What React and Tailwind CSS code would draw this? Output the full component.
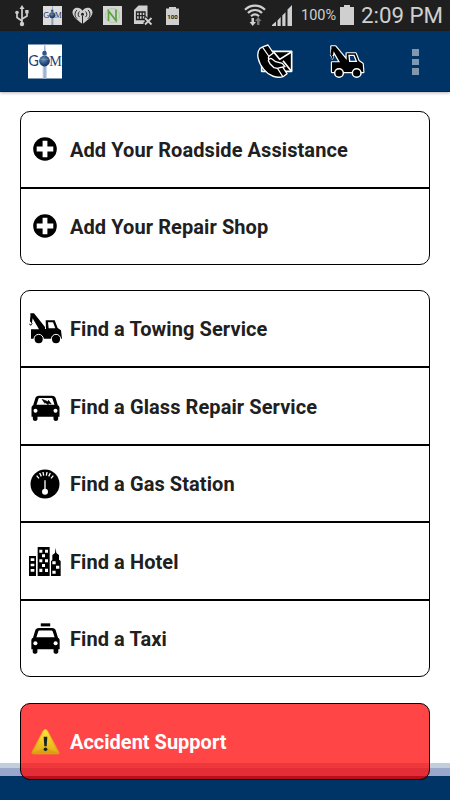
function UsbIcon() {
  return (
    <svg width="14" height="22" viewBox="0 0 14 22" fill="none" stroke="#cfcfcf" strokeWidth="1.7">
      <path d="M7 3v16M7 16 2 12.5V8M7 14l5-3V7" />
      <path d="M7 0 4.5 4h5z" fill="#cfcfcf" stroke="none" />
      <circle cx="7" cy="19" r="2.2" fill="#cfcfcf" stroke="none" />
      <circle cx="2" cy="7.5" r="1.8" fill="#cfcfcf" stroke="none" />
      <path d="M10.2 5h3.4v3.4h-3.4z" fill="#cfcfcf" stroke="none" />
    </svg>
  )
}

function GomLogo({ className }) {
  return (
    <svg className={className} viewBox="0 0 34 34">
      <defs>
        <radialGradient id="globe" cx="0.4" cy="0.35" r="0.7">
          <stop offset="0" stopColor="#7192b8" />
          <stop offset="0.6" stopColor="#294d7c" />
          <stop offset="1" stopColor="#12305c" />
        </radialGradient>
      </defs>
      <path fill="#fff" d="M0 0h34v34H0z" />
      <path fill="#b4c5dc" d="M16.4 0h.8l.5 7 1 3v24h-4V10l1-3z" />
      <path fill="#8ba5c8" d="M16.7 0h.4l.3 8v26h-1V8z" />
      <path fill="#335784" d="M15 6.5h3l.8 2-.5 2h-3.600l-.5-2z" />
      <text x="0.3" y="21.8" fontSize="14.500" fill="#1f4374" textLength="10.6" lengthAdjust="spacingAndGlyphs" className="font-['Lato']">G</text>
      <text x="21.2" y="21.8" fontSize="14.500" fill="#1f4374" textLength="12.6" lengthAdjust="spacingAndGlyphs" className="font-['Liberation_Serif']">M</text>
      <circle cx="16.5" cy="16.5" r="5.4" fill="url(#globe)" />
      <path d="M12 14.500c3 .8 6 .8 8.800 0" stroke="#86a2c6" strokeWidth=".5" fill="none" />
    </svg>
  )
}

function HeartRadioIcon() {
  return (
    <svg width="21" height="18" viewBox="0 0 21 18">
      <path fill="#cfcfcf" d="M10.5 17C7 14 .5 10 .5 5.400.5 2.500 2.700.7 5.300.7c2.200 0 4 1.200 5.200 3 1.200-1.800 3-3 5.200-3 2.600 0 4.800 1.800 4.800 4.700 0 4.600-6.500 8.600-10 11.600z" />
      <g fill="none" stroke="#222" strokeWidth="1">
        <path d="M7.500 4.500c-1.800 1.600-1.800 4 0 5.600M5 3c-2.600 2.400-2.600 6.200 0 8.600M13.500 4.500c1.800 1.600 1.800 4 0 5.600M16 3c2.600 2.400 2.600 6.200 0 8.600" />
        <path d="M10.500 9v8" />
      </g>
      <circle cx="10.500" cy="7.300" r="1.500" fill="#222" />
    </svg>
  )
}

function NIcon() {
  return (
    <svg width="19" height="19" viewBox="0 0 19 19">
      <path fill="#d5d5d5" d="M0 0h19v19H0z" />
      <circle cx="9.500" cy="9.500" r="7" fill="none" stroke="#a5c69a" strokeWidth=".8" />
      <path d="M5.500 15V5l7.500 9.500V3.500" fill="none" stroke="#58a33a" strokeWidth="1.700" />
    </svg>
  )
}

function SimIcon() {
  return (
    <svg width="20" height="21" viewBox="0 0 20 21">
      <path fill="#cfcfcf" d="M1 5 5.500.500H14.500V19H1z" />
      <path d="M3.500 7h8.500v7.500H3.500zM3.500 10.700h8.500M6.300 7v7.500M9.200 7v7.500" fill="none" stroke="#222" strokeWidth="1.300" />
      <path d="m11.500 12.500 7 7m0-7-7 7" stroke="#1f1f1f" strokeWidth="4" />
      <path d="m12 13 6.500 6.500m0-6.500L12 19.500" stroke="#cfcfcf" strokeWidth="1.800" />
    </svg>
  )
}

function SmallBatteryIcon() {
  return (
    <svg width="13" height="18" viewBox="0 0 13 18">
      <path fill="#cfcfcf" d="M3 0h7v1.500h3V18H0V1.500h3z" />
      <text x="1.300" y="11.500" fontSize="6" fontWeight="700" fill="#222" textLength="10.500" lengthAdjust="spacingAndGlyphs">100</text>
    </svg>
  )
}

function WifiIcon() {
  return (
    <svg width="22" height="23" viewBox="0 0 22 23">
      <g fill="none" stroke="#cfcfcf" strokeWidth="2.200">
        <path d="M1 5.700C6.500.200 15.500.200 21 5.700M4 9c4-4 10-4 14 0M7 12.200c2.400-2.200 5.600-2.200 8 0" />
      </g>
      <path fill="#cfcfcf" d="M7.500 14h2.500v4h2L8.700 22 5.500 18h2z" />
      <path fill="#777" d="M13 21h2.500v-4h2L14.200 13 11 17h2z" />
    </svg>
  )
}

function SignalIcon() {
  return (
    <svg width="21" height="21" viewBox="0 0 21 21" fill="#cfcfcf">
      <path d="M0 21v-1l4-3.500V21zM5.500 21v-5.500L8.700 12v9zM10.300 21V10.500l3.200-3.300V21zM15.500 21V4.500L20 0v21z" />
    </svg>
  )
}

function StatusBar() {
  return (
    <div className="flex h-[31px] items-start bg-[#1f1f1f] pl-[15px] text-[#cfcfcf]">
      <div className="mt-[5px]"><UsbIcon /></div>
      <GomLogo className="ml-[14px] mt-[6px] size-[19px] opacity-85" />
      <div className="ml-[10px] mt-[7px]"><HeartRadioIcon /></div>
      <div className="ml-[10px] mt-[6px]"><NIcon /></div>
      <div className="ml-[11px] mt-[5px]"><SimIcon /></div>
      <div className="ml-[13px] mt-[7px]"><SmallBatteryIcon /></div>
      <div className="ml-[65px] mt-[4px]"><WifiIcon /></div>
      <div className="ml-[6px] mt-[5px]"><SignalIcon /></div>
      <span className="ml-2 mt-[6px] w-[39px] text-[14.5px] leading-5">100%</span>
      <svg className="mt-[5px]" width="14" height="20" viewBox="0 0 14 20">
        <path fill="#cfcfcf" d="M4 0h6v2h4v18H0V2h4z" />
      </svg>
      <span className="ml-[7px] mt-[1px] whitespace-nowrap text-[22.3px] leading-[29px]">2:09 PM</span>
    </div>
  )
}

function TowShape() {
  return (
    <>
      <path d="M4 1h11l33 41v6h3l-1-26h27l9 23 10 7 3 25H6V49h24L11 16l-2 12-4-2z" />
      <circle cx="29" cy="79" r="12" />
      <circle cx="81" cy="79" r="12" />
    </>
  )
}

function TowTruckIcon() {
  return (
    <svg className="ml-0.5" width="34" height="31" viewBox="0 0 102 93">
      <TowShape />
      <path fill="#fff" d="M57 28h15l7 18H59z" />
      <path fill="none" stroke="#fff" strokeWidth="3" d="M15 78a14 14 0 0 1 28 0M67 78a14 14 0 0 1 28 0" />
      <path fill="none" stroke="#000" strokeWidth="3" d="m6 12-2 12 5 7-4 6-4-5" />
    </svg>
  )
}

function HeaderTowIcon() {
  return (
    <svg width="38" height="36" viewBox="-6 -6 114 108">
      <g stroke="#fff" strokeWidth="7" strokeLinejoin="round">
        <path d="M4 1h12l34 41V22h27l9 23 12 8 2 25H6V49h24L11 16l-2 12-4-2z" />
        <path d="m6 12-3 14 5 8-3 6" />
      </g>
      <path fill="none" stroke="#000" strokeWidth="4" d="m6 10-3 15 5 8-3 6" />
      <path d="M4 1h12l34 41V22h27l9 23 12 8 2 25H6V49h24L11 16l-2 12-4-2z" />
      <path fill="#003466" stroke="#fff" strokeWidth="4" d="M57 28h15l7 18H59z" />
      <circle cx="27" cy="81" r="13" stroke="#fff" strokeWidth="4.500" />
      <circle cx="80" cy="81" r="13" stroke="#fff" strokeWidth="4.500" />
    </svg>
  )
}

function ContactIcon() {
  return (
    <svg width="36" height="35" viewBox="0 0 108 105" stroke="#fff" strokeWidth="4" strokeLinejoin="round">
      <path strokeWidth="5" d="M14 22h90v60H14z" />
      <path fill="none" strokeWidth="5" d="m50 24 18 22 35-22M78 50l24 30" />
      {/* handset */}
      <path d="M19 8 33 3 49 27 37 36c-5 4-2 12 3 19 6 8 13 14 20 16l13-8 17 26-10 8c-20 8-45-2-59-20C3 56-4 27 9 13z" />
      <path fill="none" strokeWidth="3.500" d="m17 10 18 26M60 71l17 26" />
      {/* hand over the envelope */}
      <path d="M34 50c2-5 6-8 10-6l12 9 20 5 8 10-12 2-11 3-10-2-12-12z" strokeWidth="4" />
    </svg>
  )
}

function Header() {
  return (
    <header className="flex h-[61px] items-start border-b border-[#002060] bg-[#003466] pl-7 shadow-[0_1px_3px_rgba(0,0,0,0.3)]">
      <GomLogo className="mt-[13px] h-[35px] w-[34px]" />
      <div className="ml-[195px] mt-[13px]"><ContactIcon /></div>
      <div className="ml-[35px] mt-[13px]"><HeaderTowIcon /></div>
      <div className="ml-[46px] mt-[18px] flex flex-col gap-[3px]">
        <span className="size-[6.5px] bg-[#8097b0]" />
        <span className="size-[6.5px] bg-[#8097b0]" />
        <span className="size-[6.5px] bg-[#8097b0]" />
      </div>
    </header>
  )
}

function PlusIcon() {
  return (
    <svg className="mb-px" width="24" height="24" viewBox="0 0 24 24">
      <circle cx="12" cy="12" r="11.800" />
      <path fill="#fff" d="M9.600 3.700h4.800v5.900h5.900v4.800h-5.900v5.900H9.600v-5.900H3.700V9.600h5.900z" />
    </svg>
  )
}

function CarBody() {
  return (
    <>
      <path fillRule="evenodd" d="M6 31 12 11c2-7 5-9 12-9h38c7 0 10 2 12 9l6 20c4 2 5 5 5 9v25h-4v7c0 8-14 8-14 0v-7H19v7c0 8-14 8-14 0v-7H1V40c0-4 1-7 5-9zm10-2h54l-5-15c-1-4-3-5-6-5H27c-4 0-5 1-6 5z" />
      <circle cx="13" cy="47" r="6" fill="#fff" />
      <circle cx="73" cy="47" r="6" fill="#fff" />
    </>
  )
}

function GlassIcon() {
  return (
    <svg className="mt-1" width="29" height="26" viewBox="0 0 86 78">
      <CarBody />
      <path d="m33 13 17 7 2-4 8 11-7-2-2 4-8-6-2 2z" stroke="#000" strokeWidth="2" />
    </svg>
  )
}

function TaxiIcon() {
  return (
    <svg width="29" height="31" viewBox="0 0 86 92">
      <path d="M29 1h28v9H29z" />
      <g transform="translate(0 13)"><CarBody /></g>
    </svg>
  )
}

function GaugeIcon() {
  return (
    <svg width="30" height="30" viewBox="0 0 90 90">
      <circle cx="45" cy="45" r="43.500" />
      <g stroke="#fff" strokeWidth="4">
        <path d="m20 20 7 8M29 12l5 10M39 9l2 11M51 9l-2 11M61 12l-5 10M70 20l-7 8" />
        <path d="M45 34v32" />
      </g>
      <circle cx="45" cy="68" r="9" fill="#fff" />
    </svg>
  )
}

function HotelIcon() {
  return (
    <svg width="32" height="29" viewBox="0 0 96 87">
      <path d="M0 27h21v60H0zM26 0h36v87H26zM66 87V43l4-5V24l8-6 2-16 2 16 8 6v14l5 4v45z" />
      <path fill="#fff" d="M5 34h11v8H5zM5 50h11v8H5zM5 66h11v8H5zM31 8h9v9h-9zM48 8h9v9h-9zM39 22h9v9h-9zM31 37h9v9h-9zM48 37h9v9h-9zM39 51h9v9h-9zM31 65h9v10h-9zM48 65h9v10h-9zM70 43h10v9H70zM81 56h10v9H81zM70 71h10v9H70z" />
    </svg>
  )
}

function WarningIcon() {
  return (
    <svg width="29" height="26" viewBox="0 0 87 78">
      <defs>
        <linearGradient id="warn" x2="0" y2="1">
          <stop stopColor="#ffe63a" />
          <stop offset=".55" stopColor="#efbd1c" />
          <stop offset="1" stopColor="#d89a10" />
        </linearGradient>
      </defs>
      <path d="M36 6c4-7 10-7 14 0l33 62c3 5 1 7-4 7H8c-6 0-7-3-4-8z" fill="url(#warn)" stroke="#dfa31b" strokeWidth="2" />
      <path d="M43 5 7 71l36-16 38 16z" fill="#ffe64a" opacity=".2" />
      <path d="M38 23h11l-2 29h-7z" fill="#1b2520" />
      <circle cx="43.500" cy="61" r="5.500" fill="#1b2520" />
    </svg>
  )
}

const saved = [
  { label: 'Add Your Roadside Assistance', icon: <PlusIcon />, size: 'h-[77px] border-b-2' },
  { label: 'Add Your Repair Shop', icon: <PlusIcon />, size: 'h-[75px]' },
]

const services = [
  { label: 'Find a Towing Service', icon: <TowTruckIcon />, size: 'h-[77px] border-b-2' },
  { label: 'Find a Glass Repair Service', icon: <GlassIcon />, size: 'h-[78px] border-b-2' },
  { label: 'Find a Gas Station', icon: <GaugeIcon />, size: 'h-[77px] border-b-2' },
  { label: 'Find a Hotel', icon: <HotelIcon />, size: 'h-[78px] border-b-2' },
  { label: 'Find a Taxi', icon: <TaxiIcon />, size: 'h-[75px]' },
]

function Group({ items, className }) {
  return (
    <div className={`rounded-[10px] border border-black bg-white ${className}`}>
      {items.map((item) => (
        <div key={item.label} className={`flex items-center border-black ${item.size}`}>
          <div className="flex w-12 justify-center">{item.icon}</div>
          <span className="ml-px whitespace-nowrap pt-px text-[20px] font-bold leading-6 tracking-[0.08px] text-[#202020]">{item.label}</span>
        </div>
      ))}
    </div>
  )
}

export default function App() {
  return (
    <div className="relative flex h-[800px] w-[450px] flex-col overflow-hidden bg-white font-['Roboto',sans-serif]">
      <StatusBar />
      <Header />
      <main className="relative z-10 flex flex-col px-5 pt-[19px]">
        <Group items={saved} className="" />
        <Group items={services} className="mt-[25px]" />
        <button className="mt-[26px] flex h-[77px] items-center rounded-[10px] border border-black bg-[#ff0000]/73">
          <div className="flex w-[49px] justify-center"><WarningIcon /></div>
          <span className="text-[20px] font-bold leading-6 text-white">Accident Support</span>
        </button>
      </main>
      {/* footer strip shows through the translucent button */}
      <div className="absolute inset-x-0 bottom-0 h-[37px] border-t-[5px] border-[#c3cedc] bg-[#003466]">
        <div className="h-2 bg-[#99a8ca]" />
      </div>
    </div>
  )
}
